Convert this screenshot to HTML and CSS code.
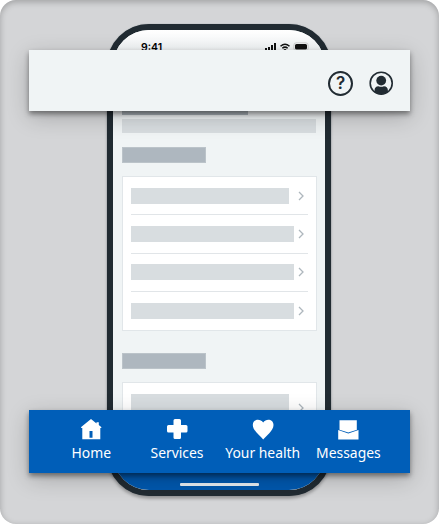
FILE: index.html
```html
<!DOCTYPE html>
<html lang="en">
<head>
<meta charset="utf-8">
<title>App navigation</title>
<link rel="stylesheet" href="styles.css">
</head>
<body>
<main class="stage">
  <div class="phone">
    <div class="status">
      <span class="time">9:41</span>
      <svg class="signals" width="44" height="10" viewBox="0 0 44 10">
        <path d="M0 6h2v4H0zM3 5h2v5H3zM6 3h2v7H6zM9 1h2v9H9z"/>
        <path d="M15.500 4.200Q20 .2 24.500 4.200M17.300 6.300Q20 4 22.700 6.300" fill="none" stroke="#111" stroke-width="1.500"/>
        <path d="M18.500 7.500Q20 6.500 21.500 7.500L20 9z"/>
        <rect x="30" y="2" width="12" height="5.500" rx="1.500"/>
        <rect x="28.800" y=".8" width="14.400" height="8" rx="2.500" fill="none" stroke="#bbb" stroke-width=".6"/>
      </svg>
    </div>
    <div class="content">
      <div class="bar title"></div>
      <div class="bar intro"></div>
      <div class="bar heading"></div>
      <div class="card">
        <div class="row"><div class="bar short"></div><svg class="chevron" viewBox="0 0 6 10"><path d="M1 1l4 4-4 4"/></svg></div>
        <div class="row"><div class="bar long"></div><svg class="chevron" viewBox="0 0 6 10"><path d="M1 1l4 4-4 4"/></svg></div>
        <div class="row"><div class="bar long"></div><svg class="chevron" viewBox="0 0 6 10"><path d="M1 1l4 4-4 4"/></svg></div>
        <div class="row"><div class="bar long"></div><svg class="chevron" viewBox="0 0 6 10"><path d="M1 1l4 4-4 4"/></svg></div>
      </div>
      <div class="bar heading second"></div>
      <div class="card">
        <div class="row tall"><div class="bar short large"></div><svg class="chevron" viewBox="0 0 6 10"><path d="M1 1l4 4-4 4"/></svg></div>
      </div>
    </div>
    <div class="base"><div class="indicator"></div></div>
  </div>
  <header class="topbar">
    <div class="help">?</div>
    <svg class="account" width="24" height="24" viewBox="0 0 24 24">
      <circle cx="12.200" cy="12.200" r="11" fill="none" stroke="#212b32" stroke-width="1.600"/>
      <circle cx="12.200" cy="9.600" r="4.900"/>
      <path d="M5.500 20.700v-1.300q0-4 4-4.200 2.700 1.200 5.400 0 4 .2 4 4.200v1.300Q12.200 25.700 5.500 20.700z"/>
    </svg>
  </header>
  <nav class="tabs">
    <a class="tab">
      <svg width="22" height="22" viewBox="0 0 22 22"><path fill-rule="evenodd" d="M11 1L.9 9.300 1.400 10H2.300v11.300h18V10h.8l.4-.7-2.700-2.200V4.200H16.500v1.200zM9.500 13h3v6.800h-3z"/></svg>
      <span>Home</span>
    </a>
    <a class="tab">
      <svg width="22" height="22" viewBox="0 0 22 22"><path d="M9 1h4.500q1.500 0 1.500 1.500v4.600h5q1.500 0 1.500 1.500v4.400q0 1.500-1.500 1.500h-5v5q0 1.500-1.500 1.500H9q-1.500 0-1.500-1.500v-5h-5Q1 14.500 1 13V8.600q0-1.500 1.500-1.500h5V2.500Q7.500 1 9 1z"/></svg>
      <span>Services</span>
    </a>
    <a class="tab">
      <svg width="22" height="22" viewBox="0 0 22 22"><path d="M11.200 21.600C8.500 17.800.8 12.800.8 6.900.8 1.200 8-.2 11.200 4.600 14.200-.2 21.500 1.200 21.500 6.900 21.500 12.800 13.700 17.800 11.200 21.600z"/></svg>
      <span>Your health</span>
    </a>
    <a class="tab">
      <svg width="22" height="22" viewBox="0 0 22 22"><path d="M2.500 2.200h17.300v9.300l.2.300-8.700 2.600-8.800-2.600zM1.200 12l10.100 3.500L21.500 12v9.400H1.200z"/></svg>
      <span>Messages</span>
    </a>
  </nav>
</main>
</body>
</html>
```
FILE: styles.css
```css
* { box-sizing: border-box; }
body { margin: 0; background: #fff; }
.stage {
  position: relative;
  width: 439px;
  height: 524px;
  padding-top: 24px;
  overflow: hidden;
  border-radius: 16px;
  background: #d4d5d7;
  box-shadow: inset 0 2px 6px rgba(0, 0, 0, .25);
}
.phone {
  display: flex;
  flex-direction: column;
  width: 224px;
  height: 472px;
  margin-left: 107px;
  overflow: hidden;
  border: 6px solid #212b32;
  border-radius: 42px;
  background: #f0f4f5;
  box-shadow: 0 3px 3px rgba(0, 0, 0, .25), 0 0 1px #69727a;
}
.status {
  display: flex;
  flex: none;
  justify-content: space-between;
  height: 50px;
  padding: 10px 16px 0 28px;
  background: linear-gradient(#fff, #f0f4f5 22px);
}
.time { font: 600 10.5px/15px Inter, sans-serif; }
.signals { margin-top: 2px; fill: #111; }
.content { flex: none; height: 330px; padding: 20px 9px 0; overflow: hidden; }
.bar { flex: none; height: 16px; background: #d8dde0; }
.title { width: 126px; height: 15px; background: #aeb7bd; }
.intro { width: 194px; height: 14px; margin-top: 4px; }
.heading { width: 84px; margin: 14px 0 13px; background: #aeb7bf; border: 1px solid #bbc3c9; }
.second { margin: 22px 0 13px; }
.card { width: 195px; padding: 0 8px; border: 1px solid #e1e6e9; background: #fff; }
.row {
  display: flex;
  justify-content: space-between;
  align-items: center;
  height: 38.500px;
  padding-right: 4.500px;
  border-bottom: 1px solid #e1e5e8;
}
.row:first-child { height: 38px; }
.row:last-child { height: 38px; border: 0; }
.row.tall { height: 50px; }
.short { width: 158px; }
.long { width: 163px; }
.large { height: 28px; }
.chevron { width: 6px; height: 10px; fill: none; stroke: #aeb7bd; stroke-width: 1.300; }
.base { display: flex; flex: 1; align-items: flex-end; justify-content: center; padding-bottom: 4px; background: #0058ae; }
.indicator { width: 79px; height: 3px; border-radius: 1px; background: #e7edf3; }
.topbar, .tabs {
  position: absolute;
  left: 29px;
  width: 381px;
  display: flex;
  box-shadow: 0 3px 5px rgba(0, 0, 0, .42), 0 6px 22px rgba(0, 0, 0, .22);
}
.topbar {
  top: 50px;
  height: 61px;
  padding: 21px 17px 0 0;
  justify-content: flex-end;
  gap: 16px;
  background: #f0f4f5;
}
.help {
  width: 25px;
  height: 25px;
  border: 2px solid #212b32;
  border-radius: 50%;
  color: #212b32;
  font: 600 17px/21px Inter, sans-serif;
  text-align: center;
}
.account { fill: #212b32; }
.tabs { top: 410px; height: 63px; padding: 8px 19px 0 19.500px; background: #005eb8; }
.tab { display: flex; flex: 0 0 85.700px; flex-direction: column; align-items: center; color: #fff; }
.tab svg { fill: #fff; }
.tab span { font: 13.900px/26px "Noto Sans", sans-serif; white-space: nowrap; }
```
